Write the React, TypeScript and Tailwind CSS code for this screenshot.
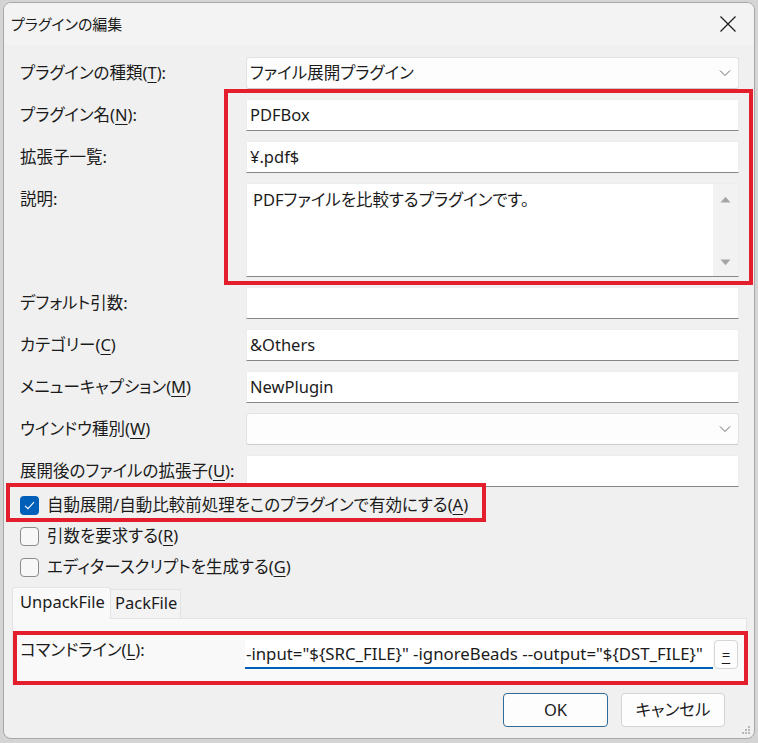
import React from "react";

const FONT = "[font-family:'Noto_Sans','Noto_Sans_CJK_JP',sans-serif] [font-feature-settings:'palt']";

const U = ({ c }: { c: string }) => (
  <span className="underline underline-offset-[3px] decoration-[1px]">{c}</span>
);

function Label({ children }: { children: React.ReactNode }) {
  return <div className="w-[226px] shrink-0 h-[32px] flex items-center whitespace-nowrap">{children}</div>;
}

function TextBox({ value }: { value?: string }) {
  return (
    <div className="flex-1 h-[32px] bg-white border border-[#ededed] border-b-[#878787] flex items-center pl-[3px] whitespace-nowrap">
      {value}
    </div>
  );
}

function Chevron() {
  return (
    <svg width="12" height="8" viewBox="0 0 12 8" className="shrink-0">
      <path d="M1 1.5 L6 6.5 L11 1.5" stroke="#6b6b6b" fill="none" strokeWidth="1" />
    </svg>
  );
}

function Combo({ value }: { value?: string }) {
  return (
    <div className="flex-1 h-[32px] bg-[#fdfdfd] border border-[#e2e2e2] border-b-[#cccccc] rounded-[3px] flex items-center pl-[3px] pr-[7px] whitespace-nowrap">
      <span className="flex-1">{value}</span>
      <Chevron />
    </div>
  );
}

function Row({ label, children }: { label: React.ReactNode; children: React.ReactNode }) {
  return (
    <div className="flex items-start">
      <Label>{label}</Label>
      {children}
    </div>
  );
}

function Check({ checked, children }: { checked?: boolean; children: React.ReactNode }) {
  return (
    <div className="flex items-center h-[31px] gap-[8px] pl-[16px]">
      {checked ? (
        <div className="w-[19px] h-[19px] rounded-[4px] bg-[#005fb8] flex items-center justify-center">
          <svg width="11" height="9" viewBox="0 0 11 9">
            <path d="M1 4.8 L4 7.6 L10 1.2" stroke="#ffffff" strokeWidth="1.1" fill="none" />
          </svg>
        </div>
      ) : (
        <div className="w-[19px] h-[19px] rounded-[4px] bg-[#f7f7f7] border border-[#8c8c8c]" />
      )}
      <span className="whitespace-nowrap">{children}</span>
    </div>
  );
}

export default function App() {
  return (
    <div className={`w-[758px] h-[743px] bg-[#d4d4d4] pt-[2px] pl-[3px] relative overflow-hidden text-[16.5px] text-[#1b1b1b] ${FONT}`}>
      {/* window */}
      <div className="w-[752px] h-[737px] rounded-[8px] border border-[#a8a8a8] bg-[#f0f0f0] overflow-hidden relative flex flex-col">
        {/* title bar */}
        <div className="h-[42px] shrink-0 bg-[#f3f3f3] flex items-center pl-[7px] pr-[17px]">
          <span className="flex-1 text-[15px]">プラグインの編集</span>
          <svg width="18" height="18" viewBox="0 0 18 18">
            <path d="M1.5 1.5 L16.5 16.5 M16.5 1.5 L1.5 16.5" stroke="#1b1b1b" strokeWidth="1.2" />
          </svg>
        </div>

        {/* body */}
        <div className="flex flex-col pt-[12px]">
          <div className="flex flex-col gap-[10px] pl-[16px] pr-[15px]">
            <Row label={<>プラグインの種類(<U c="T" />):</>}>
              <Combo value="ファイル展開プラグイン" />
            </Row>
            <Row label={<>プラグイン名(<U c="N" />):</>}>
              <TextBox value="PDFBox" />
            </Row>
            <Row label="拡張子一覧:">
              <TextBox value="¥.pdf$" />
            </Row>
            <Row label="説明:">
              <div className="flex-1 h-[94px] bg-white border border-[#ededed] border-b-[#878787] flex">
                <div className="flex-1 pl-[6px] pt-[4px] whitespace-nowrap">PDFファイルを比較するプラグインです。</div>
                <div className="w-[25px] bg-[#f2f2f2] flex flex-col items-center justify-between pt-[12px] pb-[10px]">
                  <svg width="11" height="7" viewBox="0 0 11 7">
                    <path d="M0.5 6.5 L5.5 0.8 L10.5 6.5 Z" fill="#a5a5a5" />
                  </svg>
                  <svg width="11" height="7" viewBox="0 0 11 7">
                    <path d="M0.5 0.5 L5.5 6.2 L10.5 0.5 Z" fill="#a5a5a5" />
                  </svg>
                </div>
              </div>
            </Row>
            <Row label="デフォルト引数:">
              <TextBox />
            </Row>
            <Row label={<>カテゴリー(<U c="C" />)</>}>
              <TextBox value="&Others" />
            </Row>
            <Row label={<>メニューキャプション(<U c="M" />)</>}>
              <TextBox value="NewPlugin" />
            </Row>
            <Row label={<>ウインドウ種別(<U c="W" />)</>}>
              <Combo />
            </Row>
            <Row label={<>展開後のファイルの拡張子(<U c="U" />):</>}>
              <TextBox />
            </Row>
          </div>

          <div className="flex flex-col mt-[3px]">
            <Check checked>
              自動展開/自動比較前処理をこのプラグインで有効にする(<U c="A" />)
            </Check>
            <Check>
              引数を要求する(<U c="R" />)
            </Check>
            <Check>
              エディタースクリプトを生成する(<U c="G" />)
            </Check>
          </div>

          {/* tabs */}
          <div className="flex flex-col mt-[4px] pl-[8px] pr-[7px]">
            <div className="flex items-end h-[31px]">
              <div className="h-[32px] w-[99px] bg-[#f9f9f9] border border-b-0 border-[#e3e3e3] rounded-t-[3px] pl-[7px] pt-[2px] relative z-10 -mb-[1px] whitespace-nowrap">
                UnpackFile
              </div>
              <div className="h-[29px] w-[70px] bg-[#f3f3f3] border border-b-0 border-l-0 border-[#e3e3e3] pl-[4px] pt-[1px] whitespace-nowrap">
                PackFile
              </div>
            </div>
            <div className="h-[66px] bg-[#f9f9f9] border border-[#e3e3e3] flex items-start pt-[21px] pl-[7px] pr-[8px]">
              <div className="w-[225px] shrink-0 h-[20px] leading-[20px] whitespace-nowrap">
                コマンドライン(<U c="L" />):
              </div>
              <div className="flex-1 h-[29px] bg-white border-b-2 border-[#005fb8] overflow-hidden flex items-center pl-[1px] whitespace-nowrap text-[16.8px]">
                <span>{'-input="${SRC_FILE}" -ignoreBeads --output="${DST_FILE}"'}</span>
              </div>
              <div className="ml-[1px] w-[24px] h-[29px] rounded-[4px] border border-[#d6d6d6] bg-[#fdfdfd] flex items-center justify-center">
                <span className="underline underline-offset-[3px] text-[15px]">=</span>
              </div>
            </div>
          </div>

          {/* buttons */}
          <div className="flex justify-end gap-[13px] pr-[29px] mt-[9px]">
            <div className="w-[105px] h-[34px] rounded-[4px] border border-[#2f6a98] bg-[#fdfdfd] flex items-center justify-center">
              OK
            </div>
            <div className="w-[104px] h-[34px] rounded-[4px] border border-[#d3d3d3] bg-[#fdfdfd] flex items-center justify-center">
              キャンセル
            </div>
          </div>
        </div>

        {/* resize grip */}
        <svg className="absolute right-[3px] bottom-[3px]" width="10" height="10" viewBox="0 0 10 10">
          <rect x="7" y="1" width="2" height="2" fill="#b8b8b8" />
          <rect x="4" y="4" width="2" height="2" fill="#b8b8b8" />
          <rect x="7" y="4" width="2" height="2" fill="#b8b8b8" />
          <rect x="1" y="7" width="2" height="2" fill="#b8b8b8" />
          <rect x="4" y="7" width="2" height="2" fill="#b8b8b8" />
          <rect x="7" y="7" width="2" height="2" fill="#b8b8b8" />
        </svg>
      </div>

      {/* red annotation boxes */}
      <div className="absolute left-[224px] top-[89px] w-[529px] h-[196px] border-4 border-[#e31e2d]" />
      <div className="absolute left-[6px] top-[483px] w-[480px] h-[39px] border-4 border-[#e31e2d]" />
      <div className="absolute left-[13px] top-[631px] w-[735px] h-[54px] border-4 border-[#e31e2d]" />
    </div>
  );
}
